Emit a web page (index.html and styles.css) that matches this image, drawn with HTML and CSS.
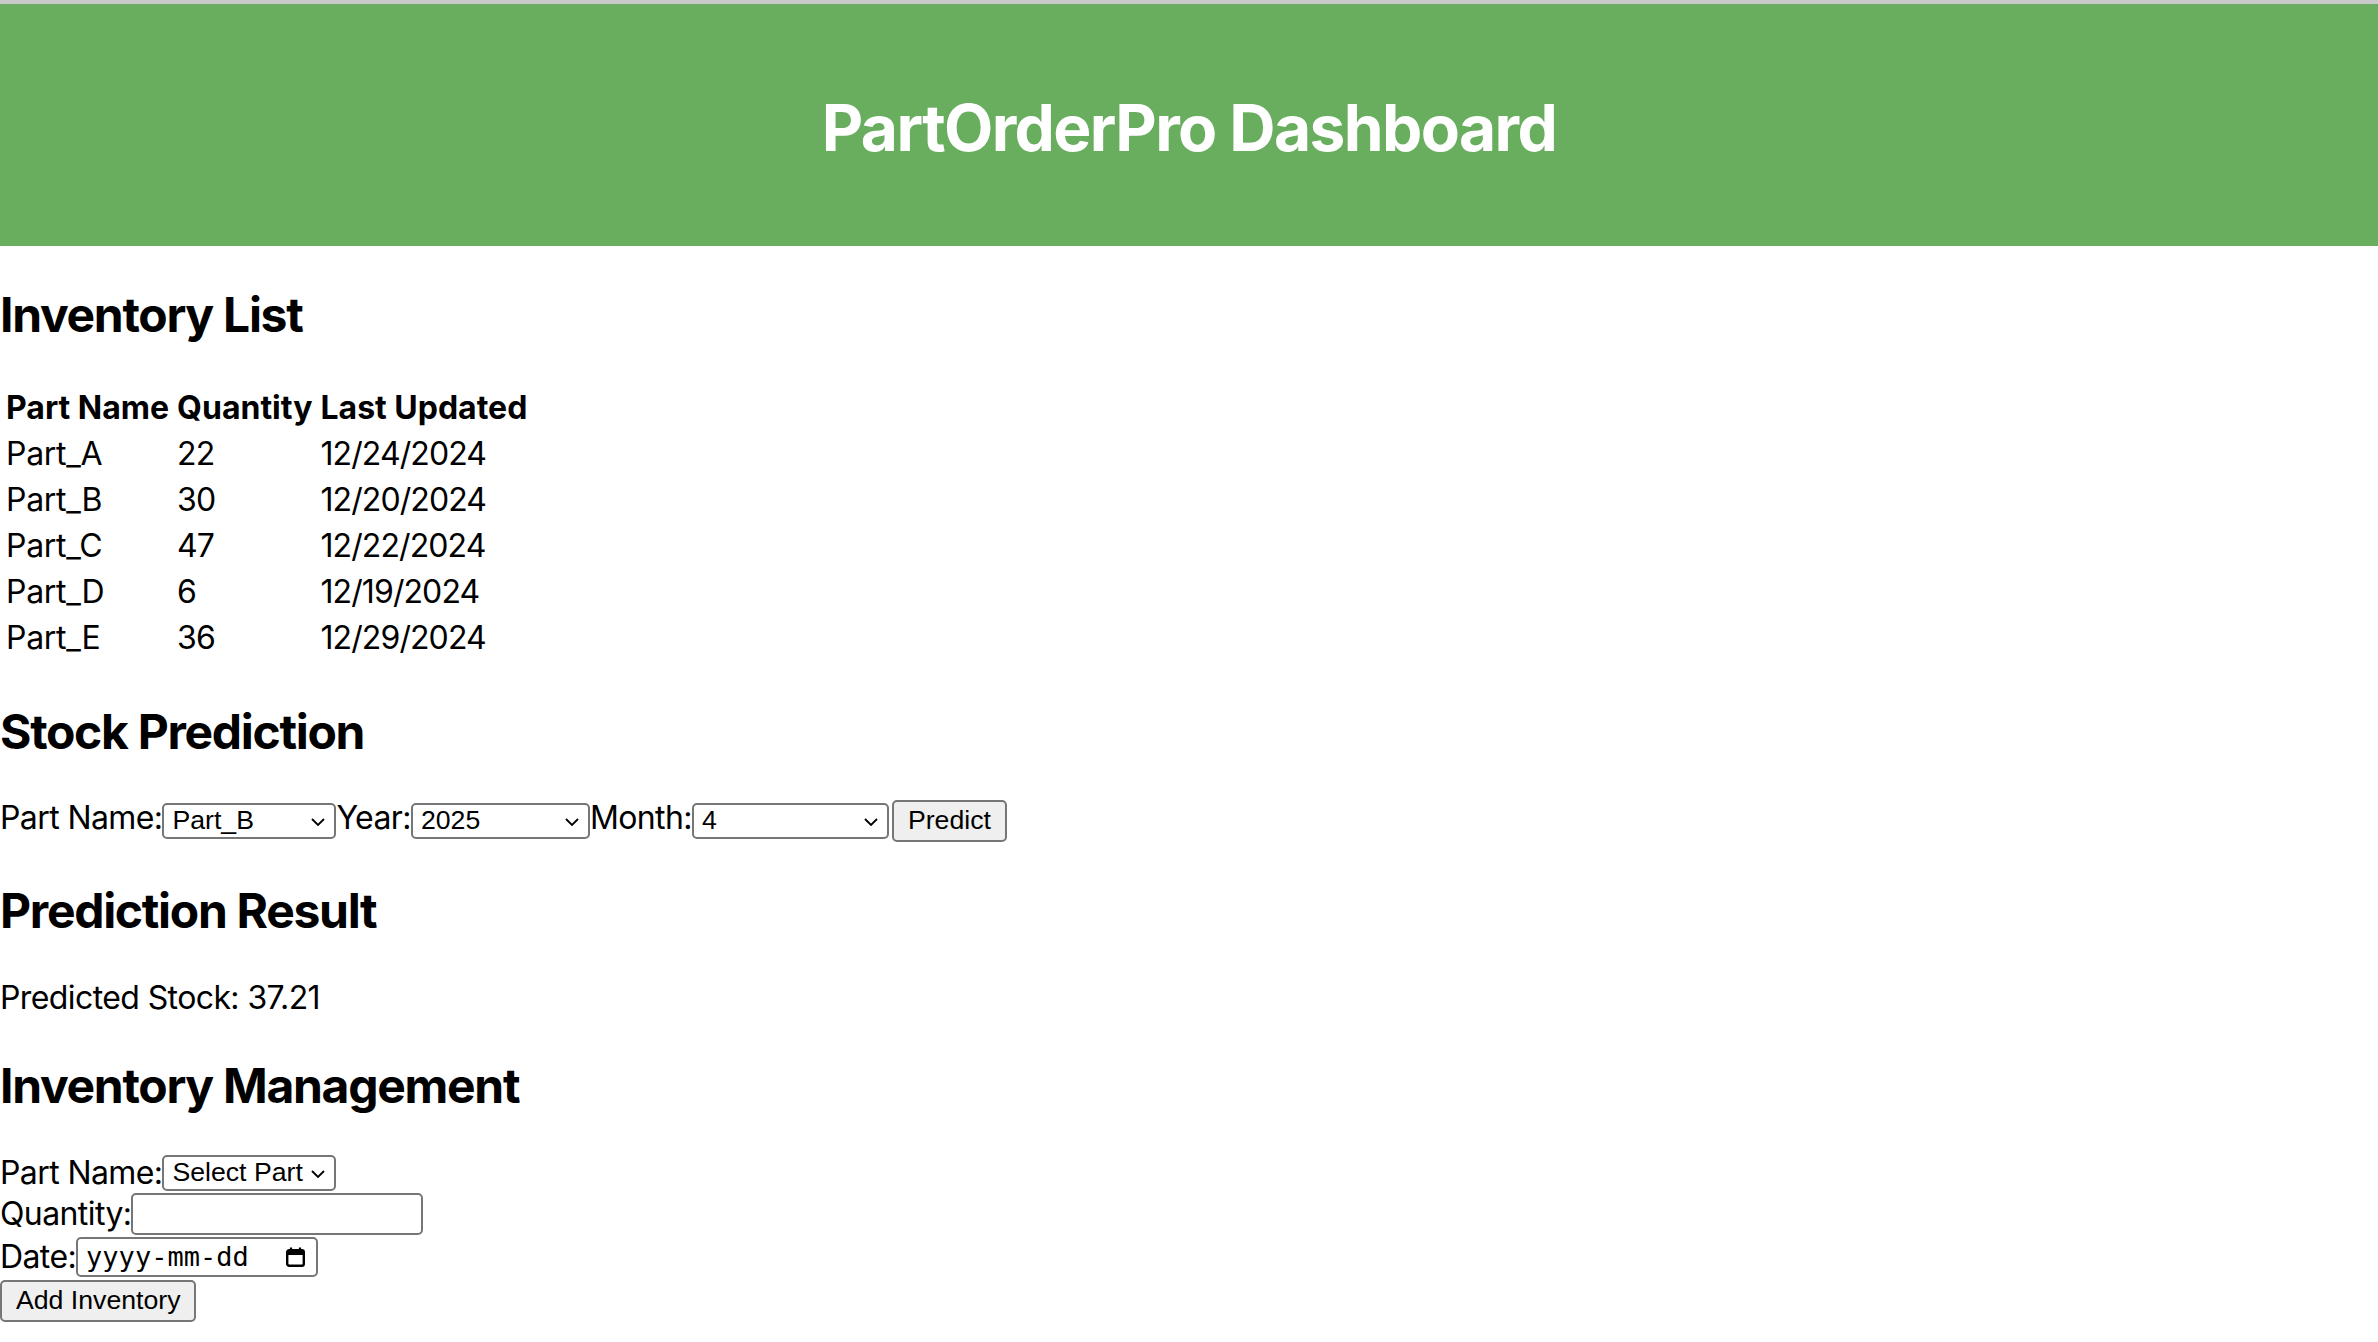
FILE: index.html
```html
<!DOCTYPE html>
<html lang="en">
<head>
<meta charset="utf-8">
<title>PartOrderPro Dashboard</title>
<link rel="stylesheet" href="styles.css">
</head>
<body>
<header class="topbar">
  <h1 class="title">PartOrderPro Dashboard</h1>
</header>
<main class="content">
  <h2 class="section-title">Inventory List</h2>
  <table class="inv-table">
    <thead>
      <tr><th>Part Name</th><th>Quantity</th><th>Last Updated</th></tr>
    </thead>
    <tbody>
      <tr><td>Part_A</td><td>22</td><td>12/24/2024</td></tr>
      <tr><td>Part_B</td><td>30</td><td>12/20/2024</td></tr>
      <tr><td>Part_C</td><td>47</td><td>12/22/2024</td></tr>
      <tr><td>Part_D</td><td>6</td><td>12/19/2024</td></tr>
      <tr><td>Part_E</td><td>36</td><td>12/29/2024</td></tr>
    </tbody>
  </table>

  <h2 class="section-title">Stock Prediction</h2>
  <form class="predict-form">
    <label class="field-label">Part Name:</label>
    <span class="select-wrap w-part">
      <select class="control-select"><option>Part_B</option><option>Part_A</option><option>Part_C</option><option>Part_D</option><option>Part_E</option></select>
      <svg class="chev" width="14" height="8" viewBox="0 0 14 8"><polyline points="1,1 7,7 13,1" fill="none" stroke="#000" stroke-width="1.8"/></svg>
    </span>
    <label class="field-label">Year:</label>
    <span class="select-wrap w-year">
      <select class="control-select"><option>2025</option><option>2024</option></select>
      <svg class="chev" width="14" height="8" viewBox="0 0 14 8"><polyline points="1,1 7,7 13,1" fill="none" stroke="#000" stroke-width="1.8"/></svg>
    </span>
    <label class="field-label">Month:</label>
    <span class="select-wrap w-month">
      <select class="control-select"><option>4</option></select>
      <svg class="chev" width="14" height="8" viewBox="0 0 14 8"><polyline points="1,1 7,7 13,1" fill="none" stroke="#000" stroke-width="1.8"/></svg>
    </span>
    <button type="button" class="btn btn-predict">Predict</button>
  </form>

  <h2 class="section-title">Prediction Result</h2>
  <p class="result">Predicted Stock: 37.21</p>

  <h2 class="section-title">Inventory Management</h2>
  <form class="manage-form">
    <div class="form-row row-1">
      <label class="field-label">Part Name:</label>
      <span class="select-wrap w-select-part">
        <select class="control-select"><option>Select Part</option></select>
        <svg class="chev" width="14" height="8" viewBox="0 0 14 8"><polyline points="1,1 7,7 13,1" fill="none" stroke="#000" stroke-width="1.8"/></svg>
      </span>
    </div>
    <div class="form-row row-2">
      <label class="field-label">Quantity:</label>
      <input type="text" class="text-input">
    </div>
    <div class="form-row row-3">
      <label class="field-label">Date:</label>
      <span class="date-input">
        <span class="date-text">yyyy-mm-dd</span>
        <svg class="cal" width="21" height="21" viewBox="0 0 21 21">
          <rect x="2.2" y="3.2" width="16.6" height="15.6" rx="2" fill="none" stroke="#000" stroke-width="2.4"/>
          <rect x="2" y="3" width="17" height="5" fill="#000"/>
          <line x1="6" y1="0.5" x2="6" y2="4" stroke="#000" stroke-width="2.2"/>
          <line x1="15" y1="0.5" x2="15" y2="4" stroke="#000" stroke-width="2.2"/>
        </svg>
      </span>
    </div>
    <div class="form-row row-4">
      <button type="button" class="btn btn-add">Add Inventory</button>
    </div>
  </form>
</main>
</body>
</html>
```

FILE: styles.css
```css
html, body {
  margin: 0;
  padding: 0;
  background: #ffffff;
  color: #000000;
}

body {
  font-family: Inter, "Noto Sans", "Liberation Sans", sans-serif;
  font-size: 32px;
  line-height: 38px;
  letter-spacing: -0.6px;
}

.topbar {
  background: #69ad5f;
  border-top: 4px solid #c9c9c9;
  padding: 40px 0;
  text-align: center;
}

.title {
  margin: 46px 0 40px;
  font-size: 64px;
  line-height: 76px;
  font-weight: 700;
  color: #ffffff;
  letter-spacing: -1.6px;
}

.content {
  margin: 0;
}

.section-title {
  margin: 40px 0;
  font-size: 48px;
  line-height: 57px;
  font-weight: 700;
  letter-spacing: -1.3px;
}

.inv-table {
  border-spacing: 4px;
  margin: 0;
}

.inv-table th,
.inv-table td {
  padding: 2px;
  text-align: left;
  line-height: 38px;
  font-size: 32px;
}

.inv-table th {
  font-weight: 700;
  letter-spacing: 0;
}

.inv-table td {
  letter-spacing: -0.3px;
}

.inv-table td:nth-child(2),
.inv-table td:nth-child(3) {
  letter-spacing: -0.9px;
}

.predict-form {
  display: flex;
  align-items: center;
  height: 42px;
}

.predict-form .field-label {
  align-self: flex-start;
  line-height: 35px;
}

.field-label {
  white-space: nowrap;
}

.select-wrap {
  position: relative;
  display: block;
  flex: none;
  height: 36px;
  letter-spacing: 0;
}

.control-select {
  -webkit-appearance: none;
  appearance: none;
  display: block;
  box-sizing: border-box;
  width: 100%;
  height: 36px;
  margin: 0;
  padding: 0 30px 2px 8px;
  border: 2px solid #767676;
  border-radius: 5px;
  background: #ffffff;
  color: #000000;
  font-family: "Liberation Sans", Arial, sans-serif;
  font-size: 26.67px;
  line-height: 30px;
}

.chev {
  position: absolute;
  right: 11px;
  top: 15px;
}

.w-part { width: 174px; }
.w-year { width: 179px; }
.w-month { width: 197px; }
.w-select-part { width: 174px; }

.btn {
  box-sizing: border-box;
  height: 42px;
  margin: 0;
  padding: 0 14px 2px;
  border: 2px solid #767676;
  border-radius: 5px;
  background: #efefef;
  color: #000000;
  font-family: "Liberation Sans", Arial, sans-serif;
  font-size: 26.67px;
  line-height: 34px;
  letter-spacing: 0;
}

.btn-predict {
  margin-left: 3px;
}

.result {
  margin: 40px 0;
}

.manage-form {
  display: flex;
  flex-direction: column;
}

.form-row {
  display: flex;
  align-items: center;
}

.row-1 { height: 38px; }
.row-2 { height: 43px; }
.row-3 { height: 44px; }
.row-4 { height: 44px; }

.text-input {
  box-sizing: border-box;
  width: 292px;
  height: 42px;
  margin: 0;
  padding: 0 6px;
  border: 2px solid #767676;
  border-radius: 5px;
  background: #ffffff;
  font-family: "Liberation Sans", Arial, sans-serif;
  font-size: 26.67px;
}

.date-input {
  box-sizing: border-box;
  display: inline-flex;
  align-items: center;
  justify-content: space-between;
  width: 242px;
  height: 40px;
  padding: 0 10px 0 8px;
  border: 2px solid #767676;
  border-radius: 5px;
  background: #ffffff;
  letter-spacing: 0;
}

.date-text {
  font-family: "DejaVu Sans Mono", "Liberation Mono", monospace;
  font-size: 27px;
  line-height: 32px;
  color: #000000;
}

.cal {
  display: block;
}
```
